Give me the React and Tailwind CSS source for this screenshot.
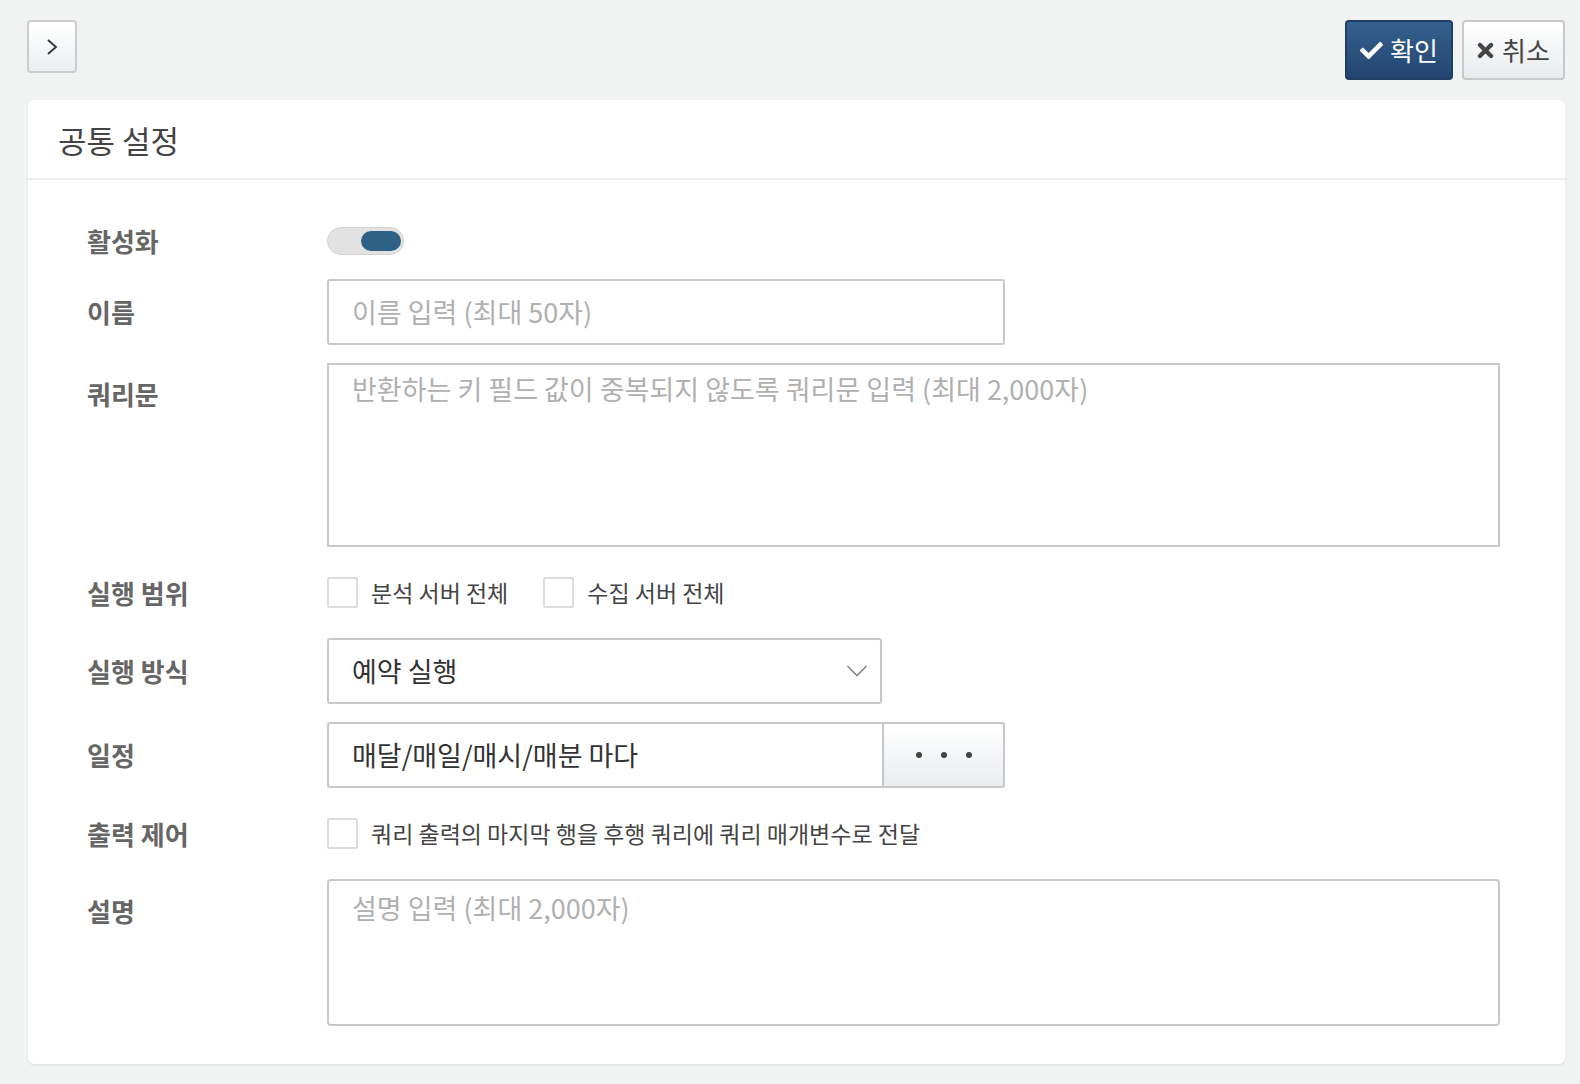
import React from "react";
import { FaCheck } from "react-icons/fa";

const font = { fontFamily: '"Noto Sans CJK KR", "Noto Sans", sans-serif' };

function Label({ children, h = "h-[66px]" }) {
  return (
    <div className={`w-[240px] shrink-0 ${h} flex items-center text-[26px] font-bold text-[#666] leading-none`}>
      {children}
    </div>
  );
}

function Checkbox({ label }) {
  return (
    <label className="flex items-center gap-[13px]">
      <span className="w-[31px] h-[31px] border-2 border-[#dcdcdc] rounded-[2px] bg-white" />
      <span className="text-[23px] text-[#444] leading-none">{label}</span>
    </label>
  );
}

export default function App() {
  return (
    <div style={font} className="min-h-[1084px] bg-[#f1f2f2] pl-[27px] pr-[15px] pt-[20px] pb-[21px]">
      <div className="flex justify-between items-start h-[60px]">
        <button className="w-[50px] h-[53px] rounded-[4px] border-2 border-[#cccccc] bg-gradient-to-b from-white to-[#eceff2] flex items-center justify-center text-[#333]">
          <svg width="14" height="20" viewBox="0 0 14 20" fill="none">
            <path d="M3 3 L11 10 L3 17" stroke="#333" strokeWidth="1.8" />
          </svg>
        </button>
        <div className="flex gap-[9px]">
          <button className="w-[108px] h-[60px] rounded-[4px] border-2 border-[#1f3e63] bg-gradient-to-b from-[#36618f] to-[#234570] text-white flex items-center justify-center gap-[7px] text-[26px]">
            <FaCheck className="w-[23px] h-[23px]" />
            <span className="leading-none">확인</span>
          </button>
          <button className="w-[103px] h-[60px] rounded-[4px] border-2 border-[#c8c8c8] bg-gradient-to-b from-white to-[#e8ebee] text-[#444] flex items-center justify-center gap-[8px] text-[26px]">
            <svg width="17" height="17" viewBox="0 0 20 20">
              <path d="M3.5 3.5 L16.5 16.5 M16.5 3.5 L3.5 16.5" stroke="#444" strokeWidth="5" strokeLinecap="round" />
            </svg>
            <span className="leading-none">취소</span>
          </button>
        </div>
      </div>

      <div className="mt-[20px] ml-[1px] bg-white rounded-[6px] shadow-[0_1px_3px_rgba(0,0,0,0.08)]">
        <div className="h-[80px] px-[30px] flex items-center border-b-2 border-[#eceeee]">
          <h1 className="text-[31px] text-[#444] leading-none">공통 설정</h1>
        </div>

        <div className="pt-[41px] pb-[38px] pl-[59px] pr-[65px] flex flex-col gap-[18px]">
          <div className="flex h-[40px]">
            <Label h="h-[40px]">활성화</Label>
            <div className="flex items-center">
              <div className="w-[77px] h-[28px] rounded-full bg-[#e2e2e2] border border-[#d2d2d2] flex items-center justify-end pr-[2px]">
                <div className="w-[40px] h-[20px] rounded-full bg-[#2d6286]" />
              </div>
            </div>
          </div>

          <div className="flex">
            <Label>이름</Label>
            <div className="w-[678px] h-[66px] border-2 border-[#c8c8c8] rounded-[3px] flex items-center px-[23px] text-[27px] text-[#b0b0b0]">
              이름 입력 (최대 50자)
            </div>
          </div>

          <div className="flex">
            <Label h="h-[62px]">쿼리문</Label>
            <div className="flex-1 h-[184px] border-2 border-[#c8c8c8] px-[23px] pt-[5px] text-[27px] leading-[38px] text-[#b0b0b0]">
              반환하는 키 필드 값이 중복되지 않도록 쿼리문 입력 (최대 2,000자)
            </div>
          </div>

          <div className="flex h-[55px]">
            <Label h="h-[55px]">실행 범위</Label>
            <div className="flex items-center gap-[35px]">
              <Checkbox label="분석 서버 전체" />
              <Checkbox label="수집 서버 전체" />
            </div>
          </div>

          <div className="flex">
            <Label>실행 방식</Label>
            <div className="w-[555px] h-[66px] border-2 border-[#c8c8c8] rounded-[3px] flex items-center justify-between pl-[23px] pr-[12px] text-[27px] text-[#333]">
              <span>예약 실행</span>
              <svg width="22" height="14" viewBox="0 0 22 14" fill="none">
                <path d="M1.5 2 L11 11.5 L20.5 2" stroke="#888" strokeWidth="1.6" />
              </svg>
            </div>
          </div>

          <div className="flex">
            <Label>일정</Label>
            <div className="flex h-[66px]">
              <div className="w-[555px] h-full border-2 border-r-0 border-[#c8c8c8] rounded-l-[3px] flex items-center px-[23px] text-[27px] text-[#333]">
                매달/매일/매시/매분 마다
              </div>
              <button className="w-[123px] h-full border-2 border-[#c8c8c8] rounded-r-[3px] bg-gradient-to-b from-white to-[#e9ecef] flex items-center justify-center gap-[19px]">
                <span className="w-[6px] h-[6px] rounded-full bg-[#444]" />
                <span className="w-[6px] h-[6px] rounded-full bg-[#444]" />
                <span className="w-[6px] h-[6px] rounded-full bg-[#444]" />
              </button>
            </div>
          </div>

          <div className="flex h-[55px]">
            <Label h="h-[55px]">출력 제어</Label>
            <div className="flex items-center">
              <Checkbox label="쿼리 출력의 마지막 행을 후행 쿼리에 쿼리 매개변수로 전달" />
            </div>
          </div>

          <div className="flex">
            <Label h="h-[64px]">설명</Label>
            <div className="flex-1 h-[147px] border-2 border-[#c8c8c8] rounded-[4px] px-[23px] pt-[8px] text-[27px] leading-[38px] text-[#b0b0b0]">
              설명 입력 (최대 2,000자)
            </div>
          </div>
        </div>
      </div>
    </div>
  );
}
